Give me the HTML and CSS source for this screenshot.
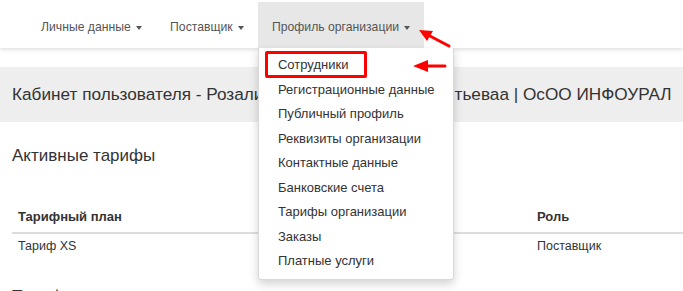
FILE: index.html
```html
<!DOCTYPE html>
<html>
<head>
    <title>Кабинет пользователя</title>
    <link rel="stylesheet" href="styles.css">
</head>
<body>
    <nav class="navbar">
        <ul class="nav">
            <li class="nav-item">Личные данные <span class="caret"></span></li>
            <li class="nav-item">Поставщик <span class="caret"></span></li>
            <li class="nav-item open">Профиль организации <span class="caret"></span>
                <ul class="dropdown-menu">
                    <li class="marked">Сотрудники</li>
                    <li>Регистрационные данные</li>
                    <li>Публичный профиль</li>
                    <li>Реквизиты организации</li>
                    <li>Контактные данные</li>
                    <li>Банковские счета</li>
                    <li>Тарифы организации</li>
                    <li>Заказы</li>
                    <li>Платные услуги</li>
                </ul>
            </li>
        </ul>
    </nav>

    <div class="page-header">
        <h2>Кабинет пользователя - Розалина Валентиновна Терентьеваа | ОсОО ИНФОУРАЛ</h2>
    </div>

    <div class="content">
        <h3>Активные тарифы</h3>
        <table class="table">
            <thead>
                <tr>
                    <th class="col-plan">Тарифный план</th>
                    <th class="col-period">Период</th>
                    <th>Роль</th>
                </tr>
            </thead>
            <tbody>
                <tr>
                    <td>Тариф XS</td>
                    <td>01.01.2020 - 31.12.2020</td>
                    <td>Поставщик</td>
                </tr>
            </tbody>
        </table>
        <h3 class="next">Тарифы</h3>
    </div>

    <!-- red arrows drawn over the screenshot -->
    <svg class="annotation" width="683" height="291" viewBox="0 0 683 291">
        <line x1="449" y1="46" x2="428" y2="35" stroke="#f00" stroke-width="3" stroke-linecap="round"/>
        <polygon points="419,30 433,31 427,41" fill="#f00"/>
        <line x1="445" y1="66" x2="426" y2="66" stroke="#f00" stroke-width="3" stroke-linecap="round"/>
        <polygon points="413,66 428,60 428,72" fill="#f00"/>
    </svg>
</body>
</html>
```

FILE: styles.css
```css
body {
    margin: 0;
    font-family: "Liberation Sans", Arial, sans-serif;
    font-size: 13px;
    color: #333;
    background-color: #fff;
    overflow: hidden;
}

.navbar {
    background-color: #fff;
    padding-top: 2px;
    box-shadow: 0 2px 4px rgba(0, 0, 0, 0.12);
    position: relative;
    z-index: 2;
}

.nav {
    display: flex;
    list-style: none;
    margin: 0;
    padding: 0 0 0 27px;
}

.nav-item {
    position: relative;
    box-sizing: border-box;
    padding: 4px 14px 0;
    height: 46px;
    line-height: 42px;
    font-size: 12.2px;
    color: #555;
}

.nav-item.open {
    background-color: #e7e7e7;
}

.caret {
    display: inline-block;
    width: 0;
    height: 0;
    margin-left: 2px;
    vertical-align: middle;
    border-top: 4px solid #555;
    border-left: 3.5px solid transparent;
    border-right: 3.5px solid transparent;
}

.dropdown-menu {
    position: absolute;
    top: 46px;
    left: 0;
    width: 196px;
    margin: 0;
    padding: 5px 0;
    list-style: none;
    background-color: #fff;
    border: 1px solid rgba(0, 0, 0, 0.15);
    border-top: none;
    border-radius: 0 0 4px 4px;
    box-shadow: 0 4px 10px rgba(0, 0, 0, 0.18);
    box-sizing: border-box;
    font-size: 13px;
    line-height: 18.5px;
}

.dropdown-menu li {
    padding: 3px 19px;
    color: #333;
    white-space: nowrap;
}

.dropdown-menu li.marked {
    position: relative;
}

.dropdown-menu li.marked::after {
    content: "";
    position: absolute;
    left: 6px;
    top: -2px;
    width: 96px;
    height: 21px;
    border: 3px solid #f00;
    border-radius: 2px;
}

.page-header {
    background-color: #eee;
    margin-top: 19px;
    padding: 0 12px;
    height: 55px;
    display: flex;
    align-items: center;
}

.page-header h2 {
    margin: 0;
    font-size: 17.2px;
    font-weight: normal;
    color: #333;
    white-space: nowrap;
}

.content {
    padding: 0 12px;
}

.content h3 {
    margin: 22px 0 0;
    font-size: 17px;
    font-weight: normal;
    line-height: 24px;
}

.content h3.next {
    margin-top: 27px;
}

.table {
    width: 690px;
    margin-top: 34px;
    border-collapse: collapse;
    table-layout: fixed;
}

.table th {
    text-align: left;
    font-weight: bold;
    padding: 6px 6px;
    line-height: 18px;
    border-bottom: 2px solid #ddd;
}

.table td {
    padding: 3px 6px;
    line-height: 18px;
    font-size: 12.5px;
    color: #333;
}

.col-plan {
    width: 250px;
}

.col-period {
    width: 245px;
}

.annotation {
    position: absolute;
    top: 0;
    left: 0;
    z-index: 3;
    pointer-events: none;
}
```
